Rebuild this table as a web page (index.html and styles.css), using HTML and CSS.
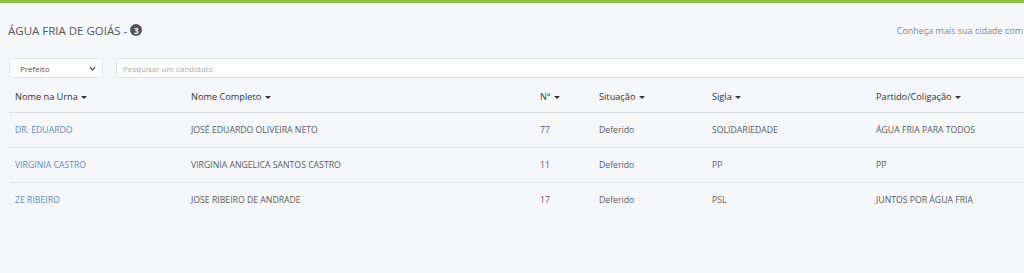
FILE: index.html
```html
<!DOCTYPE html>
<html lang="pt-BR">
<head>
<meta charset="utf-8">
<title>Água Fria de Goiás</title>
<link rel="stylesheet" href="styles.css">
</head>
<body>
<div class="topbar"></div>
<div class="page">
  <div class="heading">
    <h1 class="title">ÁGUA FRIA DE GOIÁS - <span class="badge">3</span></h1>
    <div class="more">Conheça mais sua cidade com</div>
  </div>
  <div class="filters">
    <div class="select">
      <span>Prefeito</span>
      <svg class="chev" viewBox="0 0 8 5" width="7" height="5"><path d="M1 1 L4 4 L7 1" fill="none" stroke="#444" stroke-width="1.4"/></svg>
    </div>
    <div class="search">Pesquisar um candidato</div>
  </div>
  <table class="grid">
    <thead>
      <tr>
        <th class="c1">Nome na Urna <i class="caret"></i></th>
        <th class="c2">Nome Completo <i class="caret"></i></th>
        <th class="c3">Nº <i class="caret"></i></th>
        <th class="c4">Situação <i class="caret"></i></th>
        <th class="c5">Sigla <i class="caret"></i></th>
        <th class="c6">Partido/Coligação <i class="caret"></i></th>
      </tr>
    </thead>
    <tbody>
      <tr>
        <td><a class="link">DR. EDUARDO</a></td>
        <td>JOSÉ EDUARDO OLIVEIRA NETO</td>
        <td>77</td>
        <td>Deferido</td>
        <td>SOLIDARIEDADE</td>
        <td>ÁGUA FRIA PARA TODOS</td>
      </tr>
      <tr>
        <td><a class="link">VIRGINIA CASTRO</a></td>
        <td>VIRGINIA ANGELICA SANTOS CASTRO</td>
        <td>11</td>
        <td>Deferido</td>
        <td>PP</td>
        <td>PP</td>
      </tr>
      <tr>
        <td><a class="link">ZE RIBEIRO</a></td>
        <td>JOSE RIBEIRO DE ANDRADE</td>
        <td>17</td>
        <td>Deferido</td>
        <td>PSL</td>
        <td>JUNTOS POR ÁGUA FRIA</td>
      </tr>
    </tbody>
  </table>
</div>
</body>
</html>
```

FILE: styles.css
```css
html, body {
  margin: 0;
  padding: 0;
  background: #f5f7fa;
  font-family: "Open Sans", "Liberation Sans", sans-serif;
  color: #555;
  overflow: hidden;
}
.topbar {
  height: 3px;
  background: #8cc43f;
}
.page {
  width: 1130px;
  padding: 0 0 0 9px;
}
.heading {
  display: flex;
  align-items: center;
  height: 54px;
  width: 1014px;
}
.title {
  margin: 0;
  font-size: 11.5px;
  font-weight: 400;
  color: #555;
  display: flex;
  align-items: center;
  gap: 3px;
  margin-left: -1px;
}
.badge {
  display: inline-flex;
  width: 12px;
  height: 12px;
  border-radius: 50%;
  background: #555;
  color: #fff;
  font-size: 8px;
  font-weight: 700;
  align-items: center;
  justify-content: center;
}
.more {
  font-size: 9px;
  color: #888;
  margin-left: auto;
  white-space: nowrap;
}
.filters {
  display: flex;
  gap: 13px;
  height: 20px;
  margin-top: 1px;
}
.select {
  width: 94px;
  box-sizing: border-box;
  background: #fff;
  border: 1px solid #dde1e6;
  border-radius: 3px;
  display: flex;
  align-items: center;
  justify-content: space-between;
  padding: 0 6px 0 10px;
  font-size: 8px;
  color: #555;
}
.search {
  flex: 1;
  background: #fff;
  border: 1px solid #dde1e6;
  border-radius: 3px;
  display: flex;
  align-items: center;
  padding-left: 6px;
  font-size: 8px;
  color: #aaa;
}
.grid {
  border-collapse: collapse;
  margin-top: 4px;
  width: 1120px;
  font-size: 8.7px;
}
.grid th {
  text-align: left;
  font-weight: 400;
  font-size: 9.2px;
  color: #333;
  height: 28px;
  padding: 0 6px 2px;
  border-bottom: 1px solid #dcdfe3;
}
.grid td {
  height: 34px;
  padding: 0 6px;
  border-bottom: 1px solid #e4e7ea;
  color: #5a5a5a;
}
.grid tbody tr:last-child td { border-bottom: none; }
.c1 { width: 164px; }
.c2 { width: 337px; }
.c3 { width: 47px; }
.c4 { width: 101px; }
.c5 { width: 152px; }
.caret {
  display: inline-block;
  width: 0;
  height: 0;
  border-left: 3px solid transparent;
  border-right: 3px solid transparent;
  border-top: 3px solid #333;
  vertical-align: middle;
  margin-left: 1px;
}
.link {
  color: #5d8db6;
}
```
